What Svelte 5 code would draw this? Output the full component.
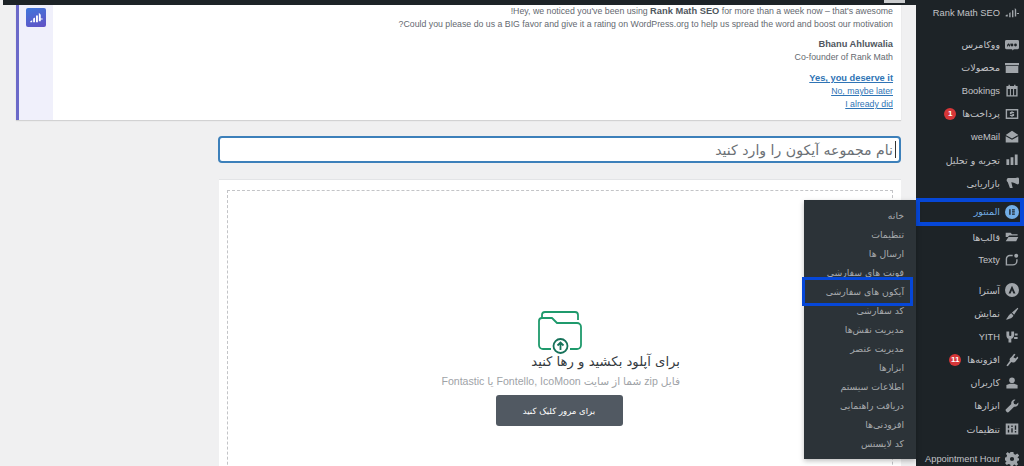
<script>
  const menu = [
    { label: 'Rank Math SEO', icon: 'rank' },
    { label: 'ووکامرس', icon: 'woo', first: true },
    { label: 'محصولات', icon: 'box' },
    { label: 'Bookings', icon: 'cal' },
    { label: 'پرداخت‌ها', icon: 'dollar', badge: '1' },
    { label: 'weMail', icon: 'mail' },
    { label: 'تجربه و تحلیل', icon: 'bars' },
    { label: 'بازاریابی', icon: 'mega' },
    { label: 'المنتور', icon: 'el', active: true },
    { label: 'قالب‌ها', icon: 'folder' },
    { label: 'Texty', icon: 'texty' },
    { label: 'آسترا', icon: 'astra', gap: true },
    { label: 'نمایش', icon: 'brush' },
    { label: 'YITH', icon: 'yith' },
    { label: 'افزونه‌ها', icon: 'plug', badge: '11' },
    { label: 'کاربران', icon: 'user' },
    { label: 'ابزارها', icon: 'wrench' },
    { label: 'تنظیمات', icon: 'sliders' },
    { label: 'Appointment Hour', icon: 'gear', gap: true }
  ];
  const sub = ['خانه', 'تنظیمات', 'ارسال ها', 'فونت های سفارشی', 'آیکون های سفارشی', 'کد سفارشی', 'مدیریت نقش‌ها', 'مدیریت عنصر', 'ابزارها', 'اطلاعات سیستم', 'دریافت راهنمایی', 'افزودنی‌ها', 'کد لایسنس'];
</script>

{#snippet icon(name)}
  <svg class="ico" viewBox="0 0 20 20" aria-hidden="true">
    {#if name === 'rank'}
      <path d="M1 13l3-1v3H1zM6 10l2-1v7H6zM10 6h2v10h-2zM14 3l2 2v10h-2zM17 10h3v1.500h-3z" />
    {:else if name === 'woo'}
      <path fill-rule="evenodd" d="M2 3h16a2 2 0 0 1 2 2v9a2 2 0 0 1-2 2h-5l-3 2 .5-2H2a2 2 0 0 1-2-2V5a2 2 0 0 1 2-2zm1 5v4h1l1-2 1 2h1l1-4H7l-.5 2-1-2h-1l-1 2-.500-2zm7 0a2 2 0 1 0 0 4 2 2 0 0 0 0-4zm5 0a2 2 0 1 0 0 4 2 2 0 0 0 0-4z" />
    {:else if name === 'box'}
      <path d="M0 3h20v3H0zM1 7h18v10H1z" />
    {:else if name === 'cal'}
      <path fill-rule="evenodd" d="M5 1h2v2h6V1h2v2h3v15H2V3h3zM4 7v9h3V7zm4.500 0v9h3V7zM13 7v9h3V7z" />
    {:else if name === 'dollar'}
      <path fill-rule="evenodd" d="M1 3h18v14H1zm2 2v10h14V5zm8 1v1h2v1.500h-3.500v1H13V13h-2v1H9v-1H7v-1.500h3.500v-1H7V7h2V6z" />
    {:else if name === 'mail'}
      <path d="M10 1l9 6-9 5-9-5zM1 9l9 5 9-5v9H1z" />
    {:else if name === 'bars'}
      <path d="M2 9h4v8H2zM8 6h4v11H8zM14 2h4v15h-4z" />
    {:else if name === 'mega'}
      <path d="M18 2a2 2 0 0 1 2 2v6a2 2 0 0 1-2 2c-3-1-6-3-9-3l2 8H7L4 9a4 4 0 0 1 0-6c5 0 10 0 14-1z" />
    {:else if name === 'el'}
      <circle cx="10" cy="10" r="10" class="el-bg" />
      <path class="el-fg" d="M6 6h2v8H6zM10 6h4v1.700h-4zM10 9.100h4v1.700h-4zM10 12.300h4V14h-4z" />
    {:else if name === 'folder'}
      <path d="M1 4h7l2 2h8v2H6L4 10H1zM1 16l4-6h14l-3 6z" />
    {:else if name === 'texty'}
      <path fill="none" stroke="currentColor" stroke-width="2" d="M11 3.500H7a5 5 0 0 0-5 5V17h9a6 6 0 0 0 6-6V9" />
      <circle cx="16" cy="4" r="2.800" />
    {:else if name === 'astra'}
      <path fill-rule="evenodd" d="M10 0a10 10 0 1 0 0 20 10 10 0 0 0 0-20zm0 4l5 11h-3l-2-4.500L8 15H5z" />
    {:else if name === 'brush'}
      <path d="M18 1l1 1-6 9-3-3zM9 9l3 3c-1 3-4 5-11 6 3-2 3-6 8-9z" />
    {:else if name === 'yith'}
      <path d="M2 2h4v5c0 2 3 2 3 0V2h4v5c0 3-2 5-4 5.500V18H5v-5.500C3 12 2 10 2 7zM14 5h4v3h-4zM13 10h5v3h-5z" />
    {:else if name === 'plug'}
      <path d="M13 1l2 1-3 4 3 2 3-3 1 2-4 5c-2 2-5 2-6 1l-5 6-2-1 5-7c-1-2 0-4 2-5z" />
    {:else if name === 'user'}
      <circle cx="10" cy="6" r="4" />
      <path d="M2 13l5-2h6l5 2v5H2z" />
    {:else if name === 'wrench'}
      <path d="M15 1a5 5 0 0 0-6 6L1 15c-1 2 2 5 4 4l8-8a5 5 0 0 0 6-6l-3 3-3-1-1-3z" />
    {:else if name === 'sliders'}
      <path fill-rule="evenodd" d="M1 2h18v16H1zm3 3v4h2V5zm0 6v4h2v-4zm5-6v2h2V5zm0 4v6h2V9zm5-4v6h2V5zm0 8v2h2v-2z" />
    {:else if name === 'gear'}
      <path fill-rule="evenodd" d="M8 0h4l.6 3 2.400 1 2.500-1.700 2.800 2.800L18 8l.5 1 1.500 0v3l-2 .6-1 2.400 1.700 2.500-2.800 2.500L14 18l-2 .5-.5 1.500H8l-.6-2-2.400-1-2.500 1.700-2.500-3L2 14l-.6-1.500L0 12V8l2-.6 1-2.400-1.700-2.500L4 0l2 2zM10 7a3 3 0 1 0 0 6 3 3 0 0 0 0-6z" />
    {/if}
  </svg>
{/snippet}

<div class="page">
  <main class="main">
    <div class="topbar"><span class="screen-tab"></span></div>

    <section class="notice">
      <div class="notice-side">
        <div class="logo">
          <svg viewBox="0 0 20 20" aria-hidden="true">
            <path d="M4 14l2-1v2H4zM7 11l2-1v5H7zM10 8h2v7h-2zM13 5l2 2v7h-2zM15 11h2v1h-2z" fill="#fff" />
          </svg>
        </div>
      </div>
      <div class="notice-body">
        <p>Hey, we noticed you've been using <b>Rank Math SEO</b> for more than a week now – that's awesome!</p>
        <p>Could you please do us a BIG favor and give it a rating on WordPress.org to help us spread the word and boost our motivation?</p>
        <p class="sign"><b>Bhanu Ahluwalia</b></p>
        <p>Co-founder of Rank Math</p>
        <p class="links"><a href="#yes"><b>Yes, you deserve it</b></a></p>
        <p><a href="#no">No, maybe later</a></p>
        <p><a href="#did">I already did</a></p>
      </div>
    </section>

    <div class="editor">
      <div class="title-input"><span class="caret"></span>نام مجموعه آیکون را وارد کنید</div>
      <div class="card">
        <div class="drop">
          <div class="drop-inner">
            <svg class="upload" viewBox="0 0 46 44" aria-hidden="true">
              <g fill="none" stroke="#1f9a6c" stroke-width="1.800">
                <path d="M5 7V4a3 3 0 0 1 3-3h30a3 3 0 0 1 3 3v5" />
                <path d="M14 38H6a4 4 0 0 1-4-4V10a3 3 0 0 1 3-3h10l5 5h20a4 4 0 0 1 4 4v18a4 4 0 0 1-4 4H33" stroke-linejoin="round" />
                <circle cx="23.500" cy="35" r="7" stroke="#16725a" />
                <path d="M23.500 39v-7M20.500 34.500l3-3 3 3" stroke="#16725a" stroke-width="1.800" />
              </g>
            </svg>
            <div class="drop-title">برای آپلود بکشید و رها کنید</div>
            <div class="drop-sub">فایل zip شما از سایت Fontello, IcoMoon یا Fontastic</div>
            <button class="browse" type="button">برای مرور کلیک کنید</button>
          </div>
        </div>
      </div>
    </div>
  </main>

  <nav class="side">
    {#each menu as item}
      <div class="row" class:first={item.first} class:gap={item.gap} class:active={item.active}>
        {@render icon(item.icon)}
        <span class="label" class:latin={/^[A-Za-z]/.test(item.label)}>{item.label}</span>
        {#if item.badge}<span class="badge">{item.badge}</span>{/if}
      </div>
    {/each}
  </nav>

  <ul class="flyout">
    {#each sub as s, i}
      <li class:current={i === 4}>{s}</li>
    {/each}
  </ul>
</div>

<style>
  :global(body) {
    margin: 0;
    background: #f0f0f1;
  }
  .page {
    position: relative;
    display: flex;
    height: 466px;
    overflow: hidden;
    background: #f0f0f1;
    font-family: "DejaVu Sans", sans-serif;
  }
  .main {
    flex: 1;
    min-width: 0;
    display: flex;
    flex-direction: column;
    padding-right: 15px;
  }
  .topbar {
    flex: none;
    height: 5px;
    margin: 0 -15px 0 3px;
    padding-right: 11px;
    display: flex;
    justify-content: flex-end;
    background: #1d2327;
  }
  .screen-tab {
    width: 21px;
    height: 3px;
    background: #c9cbcd;
  }
  .notice {
    flex: none;
    display: flex;
    height: 115px;
    margin-left: 16px;
    background: #fff;
    border-left: 3px solid #6b69c9;
    box-shadow: 0 1px 1px rgba(0, 0, 0, 0.12);
  }
  .notice-side {
    flex: none;
    width: 34px;
    background: #f0f0fb;
    display: flex;
    justify-content: center;
    padding-top: 3px;
    box-sizing: border-box;
  }
  .logo {
    width: 20px;
    height: 19px;
    border-radius: 2px;
    background: linear-gradient(160deg, #3f78dc, #6350c4);
  }
  .logo svg {
    display: block;
    width: 100%;
    height: 100%;
  }
  .notice-body {
    flex: 1;
    direction: rtl;
    padding: 0 8px 0 0;
    font-family: "Liberation Sans", sans-serif;
    font-size: 8.780px;
    line-height: 13px;
    color: #646970;
  }
  .notice-body p {
    margin: 0;
  }
  .notice-body b {
    color: #50575e;
    font-size: 9.300px;
    font-weight: 700;
  }
  .sign {
    padding-top: 7px;
  }
  .links {
    padding-top: 8px;
  }
  .notice-body a,
  .notice-body a b {
    color: #2f74b5;
  }
  .editor {
    margin: 16px 0 0 218px;
    display: flex;
    flex-direction: column;
    gap: 16px;
    flex: 1;
    min-height: 0;
  }
  .title-input {
    position: relative;
    box-sizing: border-box;
    flex: none;
    height: 27px;
    padding-right: 6px;
    direction: rtl;
    border: 2px solid #3d80ba;
    border-radius: 4px;
    background: #fff;
    color: #6b7075;
    font-size: 14.100px;
    line-height: 24px;
    white-space: nowrap;
  }
  .caret {
    position: absolute;
    right: 3px;
    top: 3px;
    width: 1px;
    height: 17px;
    background: #333;
  }
  .card {
    flex: 1;
    min-height: 0;
    margin-left: 1px;
    padding: 10px 8px 0;
    background: #fff;
    border-top: 1px solid #e3e4e6;
  }
  .drop {
    box-sizing: border-box;
    height: 320px;
    border: 1px dashed #c3c4c7;
    display: flex;
    justify-content: center;
    padding-top: 120px;
  }
  .drop-inner {
    width: 240px;
    display: flex;
    flex-direction: column;
    align-items: center;
  }
  .upload {
    width: 46px;
    height: 44px;
    flex: none;
    margin-bottom: -1px;
  }
  .drop-title {
    width: 100%;
    direction: rtl;
    font-size: 13.200px;
    line-height: 16px;
    color: #33393e;
    white-space: nowrap;
  }
  .drop-sub {
    width: 100%;
    margin-top: 4px;
    direction: rtl;
    font-family: "Liberation Sans", "DejaVu Sans", sans-serif;
    font-size: 10.600px;
    line-height: 14px;
    color: #a0a3a7;
    white-space: nowrap;
  }
  .browse {
    margin-top: 7px;
    margin-right: 2px;
    width: 127px;
    height: 31px;
    border: 0;
    border-radius: 3px;
    background: #515962;
    color: #fff;
    font-family: inherit;
    font-size: 8.500px;
    direction: rtl;
  }
  .side {
    flex: none;
    width: 108px;
    box-sizing: border-box;
    padding-top: 1px;
    background: #1d2327;
    display: flex;
    flex-direction: column;
  }
  .row {
    flex: none;
    box-sizing: border-box;
    height: 23.100px;
    padding: 0 5px;
    display: flex;
    align-items: center;
    gap: 5px;
    direction: rtl;
    color: #c3c4c7;
    font-size: 9.500px;
    white-space: nowrap;
  }
  .row.first {
    margin-top: 9px;
  }
  .row.gap {
    margin-top: 7px;
  }
  .row.active {
    position: relative;
    margin-top: 3px;
    height: 28px;
    padding: 0 5px;
    color: #72aee6;
    outline: 4.500px solid #0647d8;
    outline-offset: -4.500px;
  }
  .label.latin {
    font-family: "Liberation Sans", sans-serif;
    font-size: 9.300px;
    direction: ltr;
  }
  .ico {
    flex: none;
    width: 14px;
    height: 14px;
    fill: currentColor;
    color: #a0a5aa;
  }
  .active .el-bg {
    fill: #72aee6;
  }
  .active .el-fg {
    fill: #1d2327;
  }
  .badge {
    min-width: 12px;
    height: 12px;
    margin-right: 1px;
    padding: 0 2px;
    box-sizing: border-box;
    border-radius: 6px;
    background: #d63638;
    color: #fff;
    font: 700 8px/12px "Liberation Sans", sans-serif;
    text-align: center;
  }
  .flyout {
    position: absolute;
    left: 804px;
    top: 200px;
    width: 112px;
    height: 259px;
    box-sizing: border-box;
    margin: 0;
    padding: 5.500px 0 0;
    list-style: none;
    background: #2c3338;
    box-shadow: 0 2px 5px rgba(0, 0, 0, 0.25);
    direction: rtl;
  }
  .flyout li {
    position: relative;
    height: 19px;
    padding-right: 12px;
    color: #a7aaad;
    font-size: 9.300px;
    line-height: 19px;
    white-space: nowrap;
  }
  .flyout li.current::after {
    content: "";
    position: absolute;
    left: -2px;
    right: 3px;
    top: -5px;
    bottom: -5px;
    border: 3.500px solid #0647d8;
  }
  .flyout li.current::before {
    content: "";
    position: absolute;
    right: 5px;
    top: -2px;
    bottom: -2px;
    width: 1.500px;
    background: #72aee6;
  }
</style>
